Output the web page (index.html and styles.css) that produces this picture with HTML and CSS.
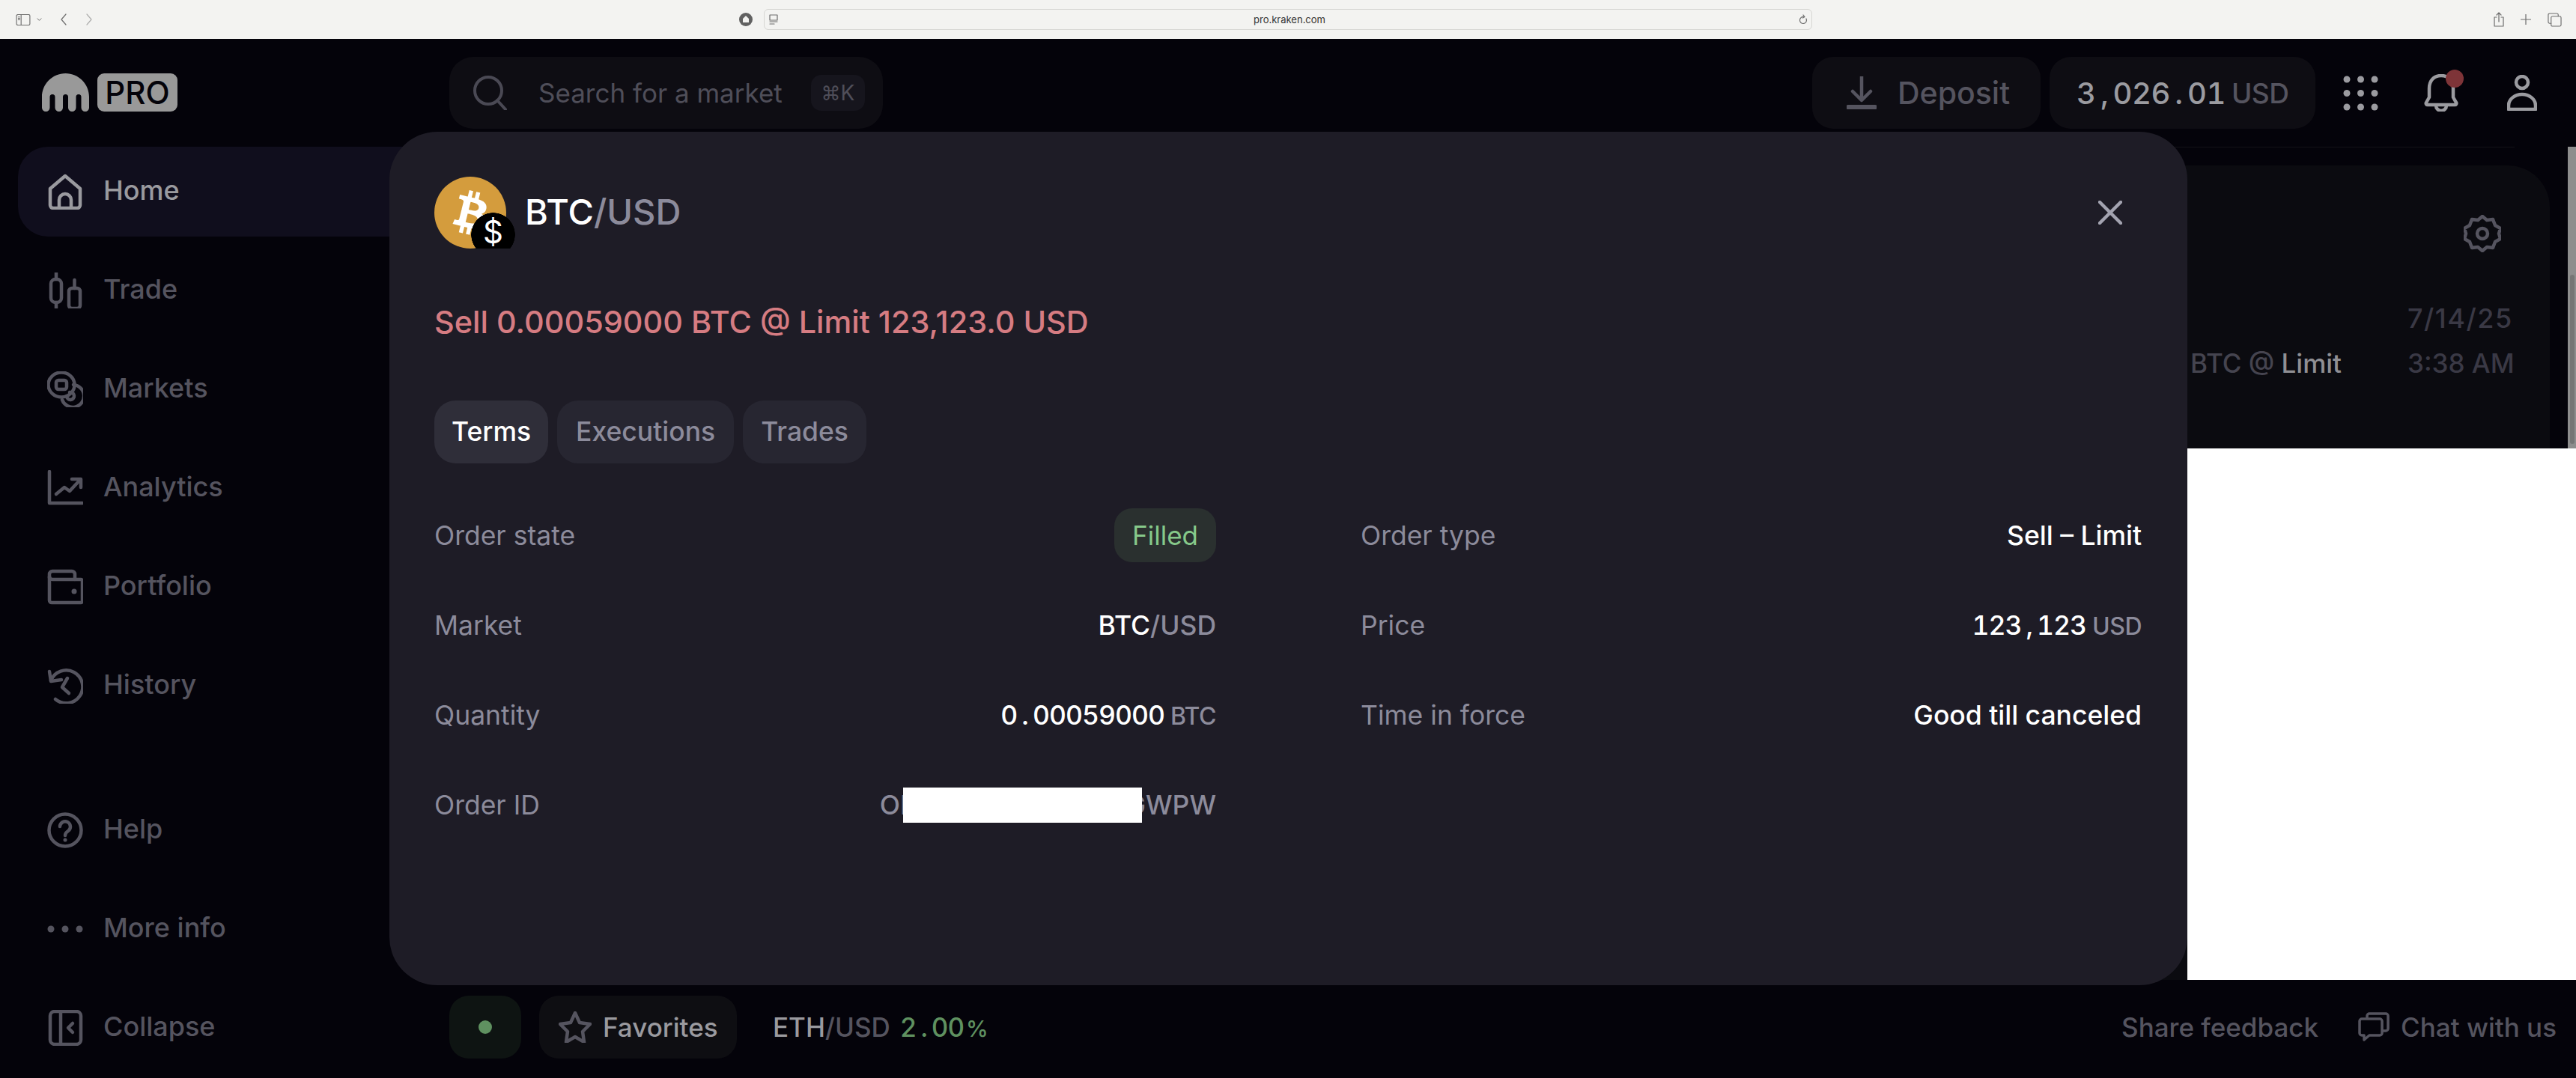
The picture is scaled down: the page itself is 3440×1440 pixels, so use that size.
FILE: index.html
```html
<!DOCTYPE html>
<html lang="en">
<head>
    <meta charset="UTF-8">
    <title>Kraken Pro</title>
    <link rel="stylesheet" href="styles.css">
</head>
<body>

    <div class="browser-bar">
        <div class="browser-left">
            <svg class="b-sidebar" viewBox="0 0 20 16"><rect x="0.5" y="0.5" width="19" height="15" rx="2"/><path d="M7 1v14M3 4h2M3 6h2M3 8h2"/></svg>
            <svg class="b-caret" viewBox="0 0 8 6"><path d="M1 1l3 3 3-3"/></svg>
            <svg class="b-nav" viewBox="0 0 10 16"><path d="M8 1L2 8l6 7"/></svg>
            <svg class="b-nav b-nav-off" viewBox="0 0 10 16"><path d="M2 1l6 7-6 7"/></svg>
        </div>
        <div class="browser-center">
            <svg class="b-shield" viewBox="0 0 18 18"><circle cx="9" cy="9" r="9"/><path d="M9 4L13 8V13H5V8Z"/></svg>
            <div class="url-bar">
                <svg class="b-reader" viewBox="0 0 12 14"><rect x="1" y="1" width="10" height="7"/><path d="M1 10h10M1 13h6"/></svg>
                <span class="url-text">pro.kraken.com</span>
                <svg class="b-reload" viewBox="0 0 12 14"><path d="M10 6a4.5 4.5 0 1 1-3-2.4M6 1l2 2.5L5.500 5"/></svg>
            </div>
        </div>
        <div class="browser-right">
            <svg class="b-share" viewBox="0 0 14 20"><path d="M4 7H1v12h12V7h-3M7 13V1M4 4l3-3 3 3"/></svg>
            <svg class="b-plus" viewBox="0 0 14 14"><path d="M7 0v14M0 7h14"/></svg>
            <svg class="b-tabs" viewBox="0 0 20 20"><rect x="5" y="5" width="14" height="14" rx="2"/><path d="M5 15H3a2 2 0 0 1-2-2V3a2 2 0 0 1 2-2h10a2 2 0 0 1 2 2v2"/></svg>
        </div>
    </div>

    <div class="app">
        <aside class="sidebar">
            <div class="logo">
                <svg class="logo-mark" viewBox="0 0 63 51"><path d="M31.500 0C14.100 0 0 14.100 0 31.500V45.700a5.250 5.250 0 0 0 10.500 0V31.500a3.500 3.500 0 0 1 7 0V45.700a5.250 5.250 0 0 0 10.500 0V31.500a3.500 3.500 0 0 1 7 0V45.700a5.250 5.250 0 0 0 10.500 0V31.500a3.500 3.500 0 0 1 7 0V45.700a5.250 5.250 0 0 0 10.500 0V31.500C63 14.100 48.900 0 31.500 0Z"/></svg>
                <span class="logo-pro">PRO</span>
            </div>
            <nav class="nav">
                <a class="nav-item active">
                    <svg class="nav-icon" viewBox="0 0 48 48"><path d="M4 20L24 3l20 17v22a4 4 0 0 1-4 4H8a4 4 0 0 1-4-4Z"/><path d="M16 46V35a8 8 0 0 1 16 0v11"/></svg>
                    Home
                </a>
                <a class="nav-item">
                    <svg class="nav-icon" viewBox="0 0 48 48"><rect x="5" y="9" width="14" height="31" rx="6"/><path d="M12 0v9M12 40v8"/><rect x="29" y="21" width="15" height="27" rx="4"/><path d="M36.500 10v11"/></svg>
                    Trade
                </a>
                <a class="nav-item">
                    <svg class="nav-icon" viewBox="0 0 48 48"><ellipse cx="19" cy="18" rx="17.500" ry="16.500"/><rect x="12" y="12" width="14" height="12" rx="3"/><path d="M20 38a15 15 0 1 0 15-20"/><path d="M30 28a5 5 0 1 1-4 5"/></svg>
                    Markets
                </a>
                <a class="nav-item">
                    <svg class="nav-icon" viewBox="0 0 48 48"><path d="M3 2v42h44"/><path d="M12 32l11-9 7 5 13-14"/><path d="M33 12h12v11"/></svg>
                    Analytics
                </a>
                <a class="nav-item">
                    <svg class="nav-icon" viewBox="0 0 48 48"><path d="M3 12V7a4 4 0 0 1 4-4h26a4 4 0 0 1 4 4v7"/><path d="M3 10v32a3 3 0 0 0 3 3h39a2 2 0 0 0 2-2V16a2 2 0 0 0-2-2H7a4 4 0 0 1-4-4Z"/><circle class="icon-fill" cx="36" cy="30" r="3.500"/></svg>
                    Portfolio
                </a>
                <a class="nav-item nav-gap">
                    <svg class="nav-icon" viewBox="0 0 48 48"><path d="M5 17A22 22 0 1 1 11 42"/><path d="M3 5l2 13 14-2"/><path d="M27 14l-7 12 9 8"/></svg>
                    History
                </a>
                <a class="nav-item">
                    <svg class="nav-icon" viewBox="0 0 48 48"><circle cx="24" cy="24" r="21.500"/><path d="M17 19a7 7 0 1 1 11 6c-3 2-4 3-4 6"/><circle class="icon-fill" cx="24" cy="37" r="2.500"/></svg>
                    Help
                </a>
                <a class="nav-item">
                    <svg class="nav-icon" viewBox="0 0 48 48"><circle class="icon-fill" cx="5" cy="24" r="4.500"/><circle class="icon-fill" cx="24" cy="24" r="4.500"/><circle class="icon-fill" cx="43" cy="24" r="4.500"/></svg>
                    More info
                </a>
                <a class="nav-item">
                    <svg class="nav-icon" viewBox="0 0 48 48"><rect x="4" y="2" width="41" height="44" rx="6"/><path d="M18 2v44"/><path d="M34 18l-6 6 6 6"/></svg>
                    Collapse
                </a>
            </nav>
        </aside>

        <main class="main">
            <header class="topbar">
                <div class="search">
                    <svg class="search-icon" viewBox="0 0 46 46"><circle cx="21" cy="20" r="18"/><path d="M33 33l11 12"/></svg>
                    <span class="search-text">Search for a market</span>
                    <span class="kbd"><span class="kbd-cmd">⌘</span>K</span>
                </div>
                <div class="topbar-right">
                    <button class="top-btn deposit">
                        <svg class="deposit-icon" viewBox="0 0 40 44"><path d="M20 0v30M8 20l12 12 12-12"/><path class="deposit-line" d="M2 41h36"/></svg>
                        Deposit
                    </button>
                    <button class="top-btn balance">
                        <span class="num">3<i>,</i>026<i>.</i>01</span><span class="unit">USD</span>
                    </button>
                    <div class="top-icons">
                        <svg class="grid-icon" viewBox="0 0 47 47">
                            <circle cx="5" cy="5" r="4.500"/><circle cx="23.500" cy="5" r="4.500"/><circle cx="42" cy="5" r="4.500"/>
                            <circle cx="5" cy="23.500" r="4.500"/><circle cx="23.500" cy="23.500" r="4.500"/><circle cx="42" cy="23.500" r="4.500"/>
                            <circle cx="5" cy="42" r="4.500"/><circle cx="23.500" cy="42" r="4.500"/><circle cx="42" cy="42" r="4.500"/>
                        </svg>
                        <span class="bell">
                            <svg class="bell-icon" viewBox="0 0 46 50"><path d="M23 2C13 2 7 9 7 19v12L3 38a2 2 0 0 0 2 3h36a2 2 0 0 0 2-3l-4-7V19C39 9 33 2 23 2Z"/><path d="M16 42a7 7 0 0 0 14 0"/></svg>
                            <span class="bell-dot"></span>
                        </span>
                        <svg class="user-icon" viewBox="0 0 40 48"><circle cx="20" cy="10" r="8"/><path d="M2 46v-5a18 15 0 0 1 36 0v5Z"/></svg>
                    </div>
                </div>
            </header>

            <section class="content">
                <div class="content-line"></div>
                <div class="panel">
                    <div class="panel-head">
                        <svg class="gear" viewBox="0 0 50 50"><path d="M25 2l6 5 8-1 3 8 7 4-2 7 2 7-7 4-3 8-8-1-6 5-6-5-8 1-3-8-7-4 2-7-2-7 7-4 3-8 8 1Z"/><circle cx="25" cy="25" r="7"/></svg>
                    </div>
                    <div class="panel-row"><span class="panel-time panel-date">7/14/25</span></div>
                    <div class="panel-row"><span class="panel-desc">BTC @ <b>Limit</b></span><span class="panel-time">3:38 AM</span></div>
                </div>
            </section>

            <footer class="footer">
                <div class="footer-left">
                    <span class="status"><span class="status-dot"></span></span>
                    <button class="fav">
                        <svg class="star" viewBox="0 0 44 42"><path d="M22 2l6 13 14 2-10 10 2 14-12-7-12 7 2-14L2 17l14-2Z"/></svg>
                        Favorites
                    </button>
                    <span class="ticker">ETH<span class="dim">/USD</span></span>
                    <span class="change num">2<i>.</i>00<span class="pct">%</span></span>
                </div>
                <div class="footer-right">
                    <span>Share feedback</span>
                    <span class="chat">
                        <svg class="chat-icon" viewBox="0 0 42 40"><path d="M12 7V5a3 3 0 0 1 3-3h22a3 3 0 0 1 3 3v17a3 3 0 0 1-3 3h-4"/><path d="M2 12a3 3 0 0 1 3-3h24a3 3 0 0 1 3 3v16a3 3 0 0 1-3 3H15l-7 6v-6H5a3 3 0 0 1-3-3Z"/></svg>
                        Chat with us
                    </span>
                </div>
            </footer>
        </main>
    </div>

    <div class="scrollbar"><div class="scroll-thumb"></div></div>
    <div class="white-block"></div>

    <div class="modal">
        <div class="modal-head">
            <div class="pair-icon">
                <svg class="coin" viewBox="0 0 32 32"><circle cx="16" cy="16" r="16"/><path d="M23.189 14.020c.314-2.096-1.283-3.223-3.465-3.975l.708-2.840-1.728-.430-.690 2.765c-.454-.114-.920-.220-1.385-.326l.695-2.783L15.596 6l-.708 2.839c-.376-.086-.746-.170-1.104-.260l.002-.009-2.384-.595-.460 1.846s1.283.294 1.256.312c.700.175.826.638.805 1.006l-.806 3.235c.048.012.110.030.180.057l-.183-.045-1.130 4.532c-.086.212-.303.531-.793.410.018.025-1.256-.313-1.256-.313l-.858 1.978 2.250.561c.418.105.828.215 1.231.318l-.715 2.872 1.727.430.708-2.840c.472.127.930.245 1.378.357l-.706 2.828 1.728.430.715-2.866c2.948.558 5.164.333 6.097-2.333.752-2.146-.037-3.385-1.588-4.192 1.130-.260 1.980-1.003 2.207-2.538zm-3.950 5.538c-.533 2.147-4.148.986-5.320.695l.950-3.805c1.172.293 4.929.872 4.370 3.110zm.535-5.569c-.487 1.953-3.495.960-4.470.717l.860-3.450c.975.243 4.118.696 3.610 2.733z"/></svg>
                <span class="usd-badge">$</span>
            </div>
            <h2 class="pair-title">BTC<span class="dim">/USD</span></h2>
            <svg class="close" viewBox="0 0 32 32"><path d="M2 2l28 28M30 2L2 30"/></svg>
        </div>

        <p class="order-summary">Sell 0.00059000 BTC @ Limit 123,123.0 USD</p>

        <div class="tabs">
            <span class="tab active">Terms</span>
            <span class="tab tab-wide">Executions</span>
            <span class="tab">Trades</span>
        </div>

        <div class="terms">
            <div class="term"><span class="term-label">Order state</span><span class="pill">Filled</span></div>
            <div class="term"><span class="term-label">Order type</span><span class="term-value">Sell – Limit</span></div>
            <div class="term"><span class="term-label">Market</span><span class="term-value">BTC<span class="dim">/USD</span></span></div>
            <div class="term"><span class="term-label">Price</span><span class="term-value"><span class="num">123<i>,</i>123</span><span class="unit">USD</span></span></div>
            <div class="term"><span class="term-label">Quantity</span><span class="term-value"><span class="num">0<i>.</i>00059000</span><span class="unit">BTC</span></span></div>
            <div class="term"><span class="term-label">Time in force</span><span class="term-value">Good till canceled</span></div>
            <div class="term"><span class="term-label">Order ID</span><span class="term-value order-id">OHXXXX-XXXXX-XGWPW<span class="redact"></span></span></div>
        </div>
    </div>

</body>
</html>
```

FILE: styles.css
```css
* {
    box-sizing: border-box;
}

html, body {
    margin: 0;
    height: 100%;
    overflow: hidden;
}

body {
    background-color: #04030a;
    font-family: Inter, "Liberation Sans", sans-serif;
    font-weight: 500;
    color: #55545f;
    position: relative;
}

svg {
    display: block;
    flex: none;
    fill: none;
    stroke-linecap: round;
    stroke-linejoin: round;
}

button {
    font: inherit;
    color: inherit;
    border: none;
}

.num {
    font-feature-settings: "tnum";
    font-variant-numeric: tabular-nums;
    letter-spacing: -1px;
}

.num i {
    display: inline-block;
    width: 0.58em;
    text-align: center;
    font-style: normal;
}

.dim {
    color: #8c8b9b;
}

/* browser chrome */
.browser-bar {
    height: 52px;
    background-color: #f3f3f1;
    display: flex;
    align-items: center;
    position: relative;
}

.browser-bar svg {
    stroke: #6d6d6d;
    stroke-width: 1.2;
}

.browser-left {
    display: flex;
    align-items: center;
    margin-left: 21px;
    width: 966px;
}

.b-sidebar {
    width: 20px;
    height: 15px;
}

.b-caret {
    width: 7px;
    height: 5px;
    margin-left: 8px;
}

.b-nav {
    width: 10px;
    height: 16px;
    margin-left: 24px;
}

.b-nav-off {
    opacity: 0.5;
}

.browser-center {
    display: flex;
    align-items: center;
    width: 1433px;
}

.b-shield {
    width: 18px;
    height: 18px;
    margin-right: 15px;
}

.browser-bar .b-shield circle {
    fill: #616161;
    stroke: none;
}

.browser-bar .b-shield path {
    fill: #f3f3f1;
    stroke: none;
}

.url-bar {
    width: 1400px;
    height: 28px;
    border: 1px solid #d6d6d3;
    border-radius: 6px;
    display: flex;
    align-items: center;
    justify-content: space-between;
    padding: 0 5px 0 6px;
}

.b-reader {
    width: 12px;
    height: 14px;
}

.b-reload {
    width: 12px;
    height: 14px;
}

.url-text {
    font-family: Inter, sans-serif;
    font-size: 13px;
    font-weight: 400;
    color: #333;
    margin-left: 3px;
}

.browser-right {
    display: flex;
    align-items: center;
    margin-left: auto;
    margin-right: 19px;
    gap: 22px;
}

.b-share {
    width: 14px;
    height: 20px;
}

.b-plus {
    width: 14px;
    height: 14px;
}

.b-tabs {
    width: 19px;
    height: 19px;
}

/* page */
.app {
    height: 1388px;
    display: flex;
}

.sidebar {
    width: 600px;
    flex: none;
    padding: 46px 0 0 24px;
}

.logo {
    display: flex;
    align-items: center;
    gap: 11px;
    margin-left: 32px;
    height: 51px;
}

.logo-mark {
    width: 63px;
    height: 51px;
    fill: #999999;
}

.logo-pro {
    width: 107px;
    height: 51px;
    background-color: #999999;
    color: #04030a;
    border-radius: 9px;
    font-size: 42px;
    line-height: 51px;
    text-align: center;
}

.nav {
    margin-top: 47px;
    display: flex;
    flex-direction: column;
    gap: 12px;
}

.nav-item {
    height: 120px;
    display: flex;
    align-items: center;
    gap: 27px;
    padding: 0 0 4px 39px;
    border-radius: 40px;
    font-size: 36px;
    color: #55545f;
}

.nav-item.active {
    background-color: #100e1d;
    color: #9a9a9f;
}

.nav-gap {
    margin-bottom: 61px;
}

.nav-icon {
    width: 48px;
    height: 48px;
    margin-top: 4px;
    stroke: #55545f;
    stroke-width: 4.5;
}

.active .nav-icon {
    stroke: #9a9a9f;
}

.icon-fill {
    fill: #55545f;
    stroke: none;
}

.main {
    flex: 1;
    min-width: 0;
    display: flex;
    flex-direction: column;
    padding: 24px 26px 26px 0;
}

.topbar {
    height: 96px;
    display: flex;
    justify-content: space-between;
    padding-right: 26px;
}

.search {
    width: 579px;
    background-color: #0e0d13;
    border-radius: 32px;
    display: flex;
    align-items: center;
    padding: 0 24px 0 31px;
}

.search-icon {
    width: 46px;
    height: 46px;
    stroke: #4a4954;
    stroke-width: 4;
}

.search-text {
    margin-left: 42px;
    font-size: 35px;
    font-weight: 400;
    color: #4f4e59;
}

.kbd {
    margin-left: auto;
    width: 72px;
    height: 48px;
    border-radius: 14px;
    background-color: #16151d;
    color: #4f4e59;
    font-size: 28px;
    font-weight: 400;
    line-height: 48px;
    text-align: center;
}

.kbd-cmd {
    font-family: "DejaVu Sans", sans-serif;
    font-size: 26px;
}

.topbar-right {
    display: flex;
    align-items: center;
}

.top-btn {
    height: 96px;
    background-color: #0e0d13;
    border-radius: 28px;
    display: flex;
    align-items: center;
    font-size: 41px;
}

.deposit {
    width: 305px;
    padding-left: 46px;
    gap: 28px;
    color: #55545f;
}

.deposit-icon {
    width: 40px;
    height: 44px;
    stroke: #55545f;
    stroke-width: 4.5;
}

.deposit-line {
    stroke-width: 6;
}

.balance {
    width: 355px;
    margin-left: 12px;
    padding-left: 36px;
    color: #9b9ba0;
    font-size: 40px;
}

.balance .num {
    letter-spacing: -0.5px;
}

.unit {
    color: #55545f;
    margin-left: 8px;
    letter-spacing: -0.5px;
}

.balance .unit {
    font-size: 37px;
}

.top-icons {
    display: flex;
    align-items: center;
    margin-left: 37px;
}

.grid-icon {
    width: 47px;
    height: 47px;
    fill: #9b9ba0;
}

.bell {
    position: relative;
    margin-left: 61px;
    display: block;
}

.bell-icon {
    width: 46px;
    height: 50px;
    stroke: #9b9ba0;
    stroke-width: 4.5;
}

.bell-dot {
    position: absolute;
    top: -6px;
    right: -7px;
    width: 24px;
    height: 24px;
    border-radius: 50%;
    background-color: #7e3438;
}

.user-icon {
    width: 40px;
    height: 48px;
    margin-left: 65px;
    stroke: #9b9ba0;
    stroke-width: 4.5;
}

.content {
    flex: 1;
    display: flex;
    flex-direction: column;
    margin-top: 24px;
    min-height: 0;
}

.content-line {
    height: 1px;
    background-color: #131217;
    margin-right: 56px;
}

.panel {
    flex: 1;
    margin-top: 24px;
    margin-right: 9px;
    background-color: #0b0b10;
    border-radius: 56px;
    padding: 66px 50px 0 0;
}

.panel-head {
    display: flex;
    justify-content: flex-end;
    padding-right: 15px;
    margin-bottom: 58px;
}

.gear {
    width: 50px;
    height: 50px;
    stroke: #55545f;
    stroke-width: 4.5;
}

.panel-row {
    display: flex;
    justify-content: flex-end;
    align-items: center;
    height: 60px;
    font-size: 35px;
    white-space: nowrap;
}

.panel-time {
    color: #3a3945;
    width: 140px;
    text-align: right;
}

.panel-date {
    font-size: 36px;
    letter-spacing: 1.5px;
}

.panel-desc {
    color: #45444f;
    margin-right: 88px;
}

.panel-desc b {
    color: #8f8f94;
    font-weight: 500;
}

.footer {
    height: 84px;
    margin-top: 21px;
    display: flex;
    justify-content: space-between;
    align-items: center;
    flex: none;
}

.footer-left {
    display: flex;
    align-items: center;
    height: 100%;
}

.status {
    width: 96px;
    height: 84px;
    background-color: #0e1412;
    border-radius: 26px;
    display: flex;
    align-items: center;
    justify-content: center;
}

.status-dot {
    width: 18px;
    height: 18px;
    border-radius: 50%;
    background-color: #5f9160;
}

.fav {
    width: 264px;
    height: 84px;
    margin-left: 24px;
    background-color: #0e0e12;
    border-radius: 26px;
    display: flex;
    align-items: center;
    padding-left: 26px;
    gap: 15px;
    font-size: 35px;
    color: #9a9a9f;
}

.star {
    width: 44px;
    height: 42px;
    stroke: #55545f;
    stroke-width: 4.5;
}

.ticker {
    margin-left: 48px;
    font-size: 35px;
    color: #9a9a9f;
}

.ticker .dim {
    color: #55545f;
}

.change {
    margin-left: 13px;
    font-size: 35px;
    color: #5f9160;
}

.pct {
    margin-left: 3px;
    font-size: 30px;
}

.footer-right {
    display: flex;
    align-items: center;
    gap: 53px;
    font-size: 35px;
    color: #55545f;
}

.chat {
    display: flex;
    align-items: center;
    gap: 15px;
}

.chat-icon {
    width: 42px;
    height: 40px;
    stroke: #55545f;
    stroke-width: 3.500;
}

/* overlays */
.scrollbar {
    position: absolute;
    top: 196px;
    right: 0;
    width: 11px;
    height: 403px;
    background-color: #8d8d8d;
    padding: 171px 2px 0 3px;
}

.scroll-thumb {
    height: 226px;
    border-radius: 3px;
    background-color: #757575;
}

.white-block {
    position: absolute;
    left: 2921px;
    top: 599px;
    width: 519px;
    height: 710px;
    background-color: #ffffff;
}

.modal {
    position: absolute;
    left: 520px;
    top: 176px;
    width: 2401px;
    height: 1140px;
    background-color: #1e1c26;
    border-radius: 64px;
    padding: 60px 60px 0;
}

.modal-head {
    display: flex;
    align-items: center;
    height: 96px;
}

.pair-icon {
    position: relative;
    width: 96px;
    height: 96px;
    flex: none;
}

.coin {
    width: 96px;
    height: 96px;
}

.coin circle {
    fill: #d49c3d;
}

.coin path {
    fill: #ffffff;
}

/* badge is a circle cut flat at the bottom of the icon box */
.usd-badge {
    position: absolute;
    left: 49px;
    top: 48px;
    width: 59px;
    height: 48px;
    padding-top: 4px;
    background: radial-gradient(circle at 29.5px 29.5px, #000000 29px, transparent 29.5px);
    color: #ffffff;
    font-size: 42px;
    font-weight: 400;
    line-height: 44px;
    text-align: center;
}

.pair-title {
    margin: 0 0 3px 25px;
    font-size: 47px;
    font-weight: 500;
    color: #ffffff;
}

.close {
    margin-left: auto;
    margin-right: 27px;
    width: 32px;
    height: 32px;
    stroke: #a3a3b0;
    stroke-width: 4.5;
}

.order-summary {
    margin: 68px 0 0;
    height: 60px;
    line-height: 60px;
    font-size: 41.4px;
    color: #d67c82;
}

.tabs {
    display: flex;
    gap: 12px;
    margin-top: 75px;
}

.tab {
    height: 84px;
    padding: 0 24px;
    border-radius: 28px;
    background-color: #272631;
    color: #8c8b9b;
    font-size: 35.5px;
    line-height: 84px;
}

.tab.active {
    padding: 0 23px;
    background-color: #2f2e39;
    color: #ffffff;
}

.tab-wide {
    padding: 0 25px;
}

.terms {
    display: grid;
    grid-template-columns: 1044px 1043px;
    column-gap: 193px;
    margin-top: 36px;
}

.term {
    height: 120px;
    display: flex;
    justify-content: space-between;
    align-items: center;
    font-size: 35.5px;
}

.term-label {
    color: #8c8b9b;
    font-weight: 400;
}

.term-value {
    color: #ffffff;
}

.term-value .unit {
    color: #8c8b9b;
    font-size: 32px;
}

.order-id {
    color: #8c8b9b;
    position: relative;
}

.redact {
    position: absolute;
    right: 99px;
    top: -2px;
    width: 319px;
    height: 47px;
    background-color: #ffffff;
}

.pill {
    height: 72px;
    padding: 0 24px;
    border-radius: 24px;
    background-color: #2a302f;
    color: #86c98a;
    font-size: 35px;
    line-height: 72px;
    font-weight: 400;
}
```
